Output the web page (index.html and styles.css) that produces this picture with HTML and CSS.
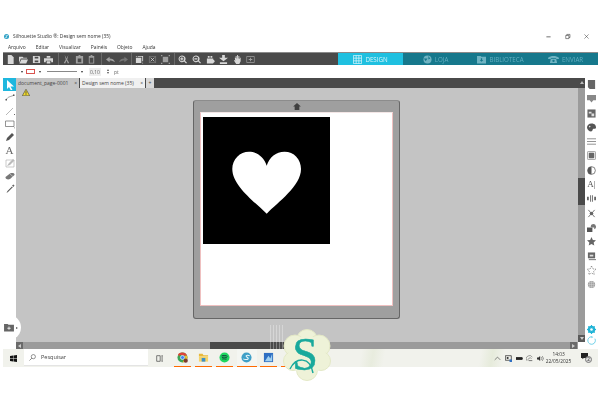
FILE: index.html
```html
<!DOCTYPE html>
<html lang="en">

<head>
    <meta charset="UTF-8">
    <title>Silhouette Studio</title>
    <link rel="stylesheet" href="styles.css">
</head>

<body>
    <!-- Title bar -->
    <div class="titlebar">
        <svg class="appicon" viewBox="0 0 10 10"><circle cx="5" cy="5" r="5" fill="#2a9fc4"/><path d="M2 7C5 8 8 6 5 5S4 2 8 3" fill="none" stroke="#fff" stroke-width="1.2"/></svg>
        <span class="apptitle">Silhouette Studio ®: Design sem nome (35)</span>
        <div class="winbtns">
            <svg viewBox="0 0 10 10"><path d="M2 5.5H8" stroke="#333"/></svg>
            <svg viewBox="0 0 10 10"><path d="M2.5 3.5H7V8H2.5ZM4 3.5V2H8.5V6.5H7" fill="none" stroke="#333" stroke-width=".8"/></svg>
            <svg viewBox="0 0 10 10"><path d="M2 2L8 8M8 2L2 8" stroke="#333" stroke-width=".7"/></svg>
        </div>
    </div>

    <!-- Menu -->
    <div class="menubar">
        <span>Arquivo</span><span>Editar</span><span>Visualizar</span><span>Painéis</span><span>Objeto</span><span>Ajuda</span>
    </div>

    <!-- Main toolbar -->
    <div class="toolbar">
        <div class="toolgroup">
            <svg viewBox="0 0 10 10"><path d="M2 0H6L8.500 2.500V10H2Z"/></svg>
            <svg viewBox="0 0 10 10"><path d="M0 2H4L5 3H9V4H2L0 9ZM2.500 5H10L8 9.500H.5Z"/></svg>
            <svg viewBox="0 0 10 10"><path d="M1 1H8L9 2V9H1ZM3 2V4H7V2ZM3 6V8H7V6Z" fill-rule="evenodd"/></svg>
            <svg viewBox="0 0 10 10"><path d="M3 1H7V3H3ZM0 3.500H10V8H8V6.500H2V8H0ZM3 7H7V9.500H3Z"/></svg>
        </div>
        <div class="toolgroup">
            <svg class="dim" viewBox="0 0 10 10"><path d="M3 0L5 4L7 0L5.800 5L8 9L6.500 9.500L5 6L3.500 9.500L2 9L4.200 5Z"/></svg>
            <svg class="dim" viewBox="0 0 10 10"><path d="M1 1H4V0H6V1H9V9.500H1ZM3 4V8H7V4Z" fill-rule="evenodd"/></svg>
            <svg class="dim" viewBox="0 0 10 10"><path d="M2 1H4V0H6V1H8V9.500H2ZM3 3V8.500H7V3Z" fill-rule="evenodd"/></svg>
        </div>
        <div class="toolgroup undo">
            <svg class="dim" viewBox="0 0 10 10"><path d="M0 5L4 2V4C7 4 9 5 10 8C8 6.500 6 6 4 6V8Z"/></svg>
            <svg class="dimmer" viewBox="0 0 10 10"><path d="M10 5L6 2V4C3 4 1 5 0 8C2 6.500 4 6 6 6V8Z"/></svg>
        </div>
        <div class="toolgroup">
            <svg viewBox="0 0 10 10"><path d="M1 3H7V9H1ZM3 1H9V7H8V2H3Z"/><path d="M1 1H2V2H1ZM8 8.500H9V9.500H8Z"/></svg>
            <svg class="dimmer" viewBox="0 0 10 10"><path d="M1 1H9V9H1ZM2 2V8H8V2Z" fill-rule="evenodd"/><path d="M3 3L7 7M7 3L3 7" stroke="#ddd" stroke-width=".8"/></svg>
            <svg class="dim" viewBox="0 0 10 10"><path d="M2 2H8V8H2Z"/><path d="M0 0H1.500V1.500H0ZM8.500 0H10V1.500H8.500ZM0 8.500H1.500V10H0ZM8.500 8.500H10V10H8.500Z"/></svg>
        </div>
        <div class="toolgroup last">
            <svg viewBox="0 0 10 10"><path d="M4.300 .5A3.800 3.800 0 1 0 6.800 7.300L9 9.500L10 8.500L7.800 6.300A3.800 3.800 0 0 0 4.300 .5ZM4.300 1.700A2.600 2.600 0 1 1 4.300 6.900A2.600 2.600 0 1 1 4.300 1.700ZM3.700 2.500H4.900V3.700H6V4.900H4.900V6H3.700V4.900H2.600V3.700H3.700Z" fill-rule="evenodd"/></svg>
            <svg viewBox="0 0 10 10"><path d="M4.300 .5A3.800 3.800 0 1 0 6.800 7.300L9 9.500L10 8.500L7.800 6.300A3.800 3.800 0 0 0 4.300 .5ZM4.300 1.700A2.600 2.600 0 1 1 4.300 6.900A2.600 2.600 0 1 1 4.300 1.700ZM2.600 3.700H6V4.900H2.600Z" fill-rule="evenodd"/></svg>
            <svg viewBox="0 0 10 10"><path d="M2 1H4V3H2ZM5 1H7V3H5ZM1 4H8V9.500H1Z"/><circle cx="7.500" cy="7" r="2"/></svg>
            <svg viewBox="0 0 10 10"><path d="M3.500 0H6.500V3H10L5 7L0 3H3.500ZM1 8H9V10H1Z"/></svg>
            <svg viewBox="0 0 10 10"><path d="M2 3H3V1H4V4H4.500V0H5.500V4H6V1H7V4.500H7.500V3H8.500V7L7 10H3.500L1 6L1.500 5.500L2.500 6.500Z"/></svg>
            <svg class="dim" viewBox="0 0 10 10"><path d="M.5 1.500H9.500V8.500H.5ZM1.200 2.200V7.800H8.800V2.200ZM4.500 3H5.500V4.500H7V5.500H5.500V7H4.500V5.500H3V4.500H4.500Z" fill-rule="evenodd"/></svg>
        </div>
        <div class="navtabs">
            <div class="navtab active">
                <svg class="navicon" viewBox="0 0 10 10"><path d="M.5 .5H9.500V9.500H.5ZM3.500 .5V9.500M6.500 .5V9.500M.5 3.500H9.500M.5 6.500H9.500" fill="none" stroke="#e2f7fc" stroke-width=".8"/></svg>
                DESIGN
            </div>
            <div class="navtab">
                <svg class="navicon" viewBox="0 0 10 10"><circle cx="5" cy="5" r="4.500" fill="#6fb3c2"/><path d="M1 4H5L3 7M6 1L8 4L6 5" fill="#16788c"/></svg>
                LOJA
            </div>
            <div class="navtab">
                <svg class="navicon" viewBox="0 0 10 10"><path d="M0 1H4L5 2H10V9.500H0Z" fill="#6fb3c2"/><path d="M4.300 3.500H5.700V5.500H7L5 7.500L3 5.500H4.300Z" fill="#16788c"/></svg>
                BIBLIOTECA
            </div>
            <div class="navtab">
                <svg class="navicon wide" viewBox="0 0 12 10"><path d="M0 3C3 .5 9 .5 12 3V4.500H9V3.500H3V4.500H0ZM3 4.500H9L10 9H2Z" fill="#6fb3c2"/><circle cx="6" cy="6.500" r="1.300" fill="#16788c"/></svg>
                ENVIAR
            </div>
        </div>
    </div>

    <!-- Line options -->
    <div class="optionsbar">
        <div class="swatch"></div>
        <span class="caret"></span>
        <div class="strokebox"></div>
        <span class="caret"></span>
        <div class="linesample"></div>
        <span class="caret"></span>
        <div class="numfield">0,10</div>
        <div class="spin"><i class="up"></i><i class="down"></i></div>
        <span class="unit">pt</span>
    </div>

    <div class="work">
        <!-- Left tools -->
        <div class="tools">
            <div class="tool selected">
                <svg viewBox="0 0 10 10"><path d="M2 0L9 6.500H5.500L7.500 10L6 10.500L4 7L2 9Z" fill="#fff"/></svg>
            </div>
            <div class="tool"><svg viewBox="0 0 10 10"><path d="M1 7C3 3 6 4 9 2" fill="none" stroke="#777" stroke-width=".7"/><path d="M.5 6H2V7.500H.5ZM8 1.500H9.500V3H8Z" fill="#555"/></svg></div>
            <div class="tool"><svg viewBox="0 0 10 10"><path d="M1 9L8 2" stroke="#999" stroke-width=".7"/><path d="M9 8H10V9H9Z" fill="#666"/></svg></div>
            <div class="tool"><svg viewBox="0 0 10 10"><path d="M.5 2H9V7.500H.5Z" fill="none" stroke="#666" stroke-width=".7"/><path d="M9.200 8.500H10V9.300H9.200Z" fill="#666"/></svg></div>
            <div class="tool"><svg viewBox="0 0 10 10"><path d="M1 9L2 6L7 1L9 3L4 8Z" fill="#555"/></svg></div>
            <div class="tool letter">A</div>
            <div class="tool"><svg viewBox="0 0 10 10"><path d="M1 2H9V9H1Z" fill="none" stroke="#aaa" stroke-width=".6"/><path d="M2 8L4 5L8 1L9.500 2.500L5 7Z" fill="#bbb"/></svg></div>
            <div class="tool"><svg viewBox="0 0 10 10"><path d="M.5 6L5 2.500C7 1.500 10 2 9.500 4L5 8C3 9 0 8 .5 6Z" fill="#777"/><path d="M5 3L8.500 6" stroke="#ddd" stroke-width=".6"/></svg></div>
            <div class="tool"><svg viewBox="0 0 10 10"><path d="M1.500 9L2.500 7L7 2.500L7.800 3.300L3 8Z" fill="#555"/><path d="M7 1.500L8.500 .5L9.500 1.500L8.500 3Z" fill="#666"/></svg></div>
        </div>

        <div class="center">
            <!-- Document tabs -->
            <div class="tabstrip">
                <div class="doctab">document_page-0001<b>×</b></div>
                <div class="doctab current">Design sem nome (35)<b>×</b></div>
                <div class="doctab add">+</div>
            </div>

            <!-- Cutting mat -->
            <div class="canvas">
                <svg class="warning" viewBox="0 0 10 9"><path d="M5 .3L9.800 8.700H.2Z" fill="#f4dd2a" stroke="#444" stroke-width=".8"/><path d="M4.500 3H5.500V6H4.500ZM4.500 6.700H5.500V7.700H4.500Z" fill="#333"/></svg>
                <div class="mat">
                    <div class="mattop">
                        <svg viewBox="0 0 10 9"><path d="M5 0L10 4.500H8V9H2V4.500H0Z" fill="#3f3f3f"/></svg>
                    </div>
                    <div class="sheet">
                        <div class="design">
                            <svg viewBox="0 0 127 127"><path d="M63.700 96.700C52 85 29.300 69 29.300 52C29.300 42 37 34.700 46 34.700C54 34.700 61 40 63.700 48.700C66.400 40 73 34.700 81.500 34.700C91 34.700 98 42 98 52C98 69 75 85 63.700 96.700Z" fill="#fff"/></svg>
                        </div>
                    </div>
                </div>
            </div>

            <div class="hscroll">
                <span class="arrow left"></span>
                <div class="hthumb"></div>
                <span class="arrow right"></span>
            </div>
        </div>

        <div class="vscroll">
            <span class="vend top"></span>
            <div class="vthumb"></div>
            <span class="vend bottom"></span>
        </div>

        <!-- Right panels -->
        <div class="panels">
            <svg viewBox="0 0 10 10"><path d="M1 0H9V10H3L1 8Z" fill="#666"/></svg>
            <svg viewBox="0 0 10 10"><path d="M0 1H10V7H7L5 9.500L3 7H0Z" fill="#888"/></svg>
            <svg viewBox="0 0 10 10"><path d="M.5 .5H9.500V9.500H.5Z" fill="#666"/><path d="M2 3H5V5H2ZM5 5H8V8H5Z" fill="#ddd"/></svg>
            <svg viewBox="0 0 10 10"><path d="M5 .5C9 .5 10 3 10 5S8 6 7 6.500S6.500 9.500 4.500 9.500S0 7.500 0 5S2 .5 5 .5Z" fill="#555"/><circle cx="3" cy="4" r=".9" fill="#ddd"/></svg>
            <svg viewBox="0 0 10 10"><path d="M0 2H10M0 5H10M0 8H10" stroke="#888" stroke-width="1"/></svg>
            <svg viewBox="0 0 10 10"><rect x=".5" y=".5" width="9" height="9" rx="1" fill="#eee" stroke="#777" stroke-width=".7"/><rect x="2" y="2" width="6" height="6" rx="1" fill="#666"/></svg>
            <svg viewBox="0 0 10 10"><circle cx="5" cy="5" r="4.300" fill="#fff" stroke="#555" stroke-width=".8"/><path d="M5 .7A4.300 4.300 0 0 0 5 9.300Z" fill="#555"/></svg>
            <div class="panelletter">A|</div>
            <svg viewBox="0 0 10 10"><path d="M0 3H2V7H0ZM3.500 1.500H4.500V8.500H3.500ZM5.500 1.500H6.500V8.500H5.500ZM8 3H10V7H8Z" fill="#666"/></svg>
            <svg viewBox="0 0 10 10"><path d="M1.500 1L8.500 9M8.500 1L1.500 9" stroke="#777" stroke-width="1.100"/><circle cx="5" cy="5" r="2" fill="#666"/></svg>
            <svg viewBox="0 0 10 10"><path d="M0 5H6V10H0Z" fill="#555"/><path d="M4 4A3 3 0 1 1 8 7V5H5Z" fill="#777"/></svg>
            <svg viewBox="0 0 10 10"><path d="M5 0L6.500 3.200L10 3.600L7.400 6L8.100 9.500L5 7.800L1.900 9.500L2.600 6L0 3.600L3.500 3.200Z" fill="#666"/></svg>
            <svg viewBox="0 0 10 10"><path d="M1 .5H9V7H1Z" fill="#666"/><path d="M3 3H7V5H3Z" fill="#ddd"/><path d="M2 8.500H10" stroke="#666"/></svg>
            <svg viewBox="0 0 10 10"><path d="M5 0L6.500 3.200L10 3.600L7.400 6L8.100 9.500L5 7.800L1.900 9.500L2.600 6L0 3.600L3.500 3.200Z" fill="none" stroke="#555" stroke-width=".8" stroke-dasharray="1 1"/></svg>
            <svg viewBox="0 0 10 10"><circle cx="5" cy="5" r="4" fill="#999"/><path d="M1 3H9M1 5H9M1 7H9M3 1V9M5 1V9M7 1V9" stroke="#ddd" stroke-width=".5"/></svg>
            <div class="panelgap"></div>
            <svg viewBox="0 0 10 10"><circle cx="5" cy="5" r="3.200" fill="none" stroke="#1fb3d6" stroke-width="2.200"/><path d="M5 0V10M0 5H10M1.500 1.500L8.500 8.500M8.500 1.500L1.500 8.500" stroke="#1fb3d6" stroke-width="1.200"/><circle cx="5" cy="5" r="1.400" fill="#fff"/></svg>
            <svg class="refresh" viewBox="0 0 10 10"><path d="M8.800 3A4.200 4.200 0 1 1 5 .8" fill="none" stroke="#6fd0e8" stroke-width="1.100"/><path d="M4.500 0L7 1L5 2.500Z" fill="#6fd0e8"/></svg>
        </div>

        <!-- Folder button sits over the canvas edge -->
        <div class="folderbtn">
            <svg viewBox="0 0 11 10"><path d="M0 1H4L5 2H11V9.500H0Z" fill="#666"/><path d="M5 4H6V5.300H7.300V6.300H6V7.500H5V6.300H3.700V5.300H5Z" fill="#eee"/></svg>
            <span></span>
        </div>
    </div>

    <!-- Windows taskbar -->
    <div class="taskbar">
        <svg class="start" viewBox="0 0 10 10"><path d="M0 1.400L4.400 .8V4.700H0ZM5 .7L10 0V4.700H5ZM0 5.300H4.400V9.200L0 8.600ZM5 5.300H10V10L5 9.300Z" fill="#111"/></svg>
        <div class="searchbox">
            <svg viewBox="0 0 10 10"><circle cx="6.200" cy="3.800" r="3" fill="none" stroke="#444" stroke-width=".8"/><path d="M4 6L.7 9.300" stroke="#444" stroke-width=".9"/></svg>
            Pesquisar
        </div>
        <svg class="taskview" viewBox="0 0 10 10"><path d="M1 1H6V9H1ZM8 1H9.500M8 9H9.500M8.700 1V9" fill="none" stroke="#333" stroke-width=".9"/></svg>
        <div class="apps">
            <div class="app">
                <svg viewBox="0 0 12 12"><circle cx="6" cy="6" r="5.500" fill="#3aa655"/><path d="M6 .5A5.500 5.500 0 0 1 11 4H6A2 2 0 0 0 2.500 5L1 2.500A5.500 5.500 0 0 1 6 .5Z" fill="#dc4437"/><path d="M11 4A5.500 5.500 0 0 1 6 11.500L8 7.500A2 2 0 0 0 8 4Z" fill="#f2c230"/><circle cx="6" cy="6" r="2.200" fill="#4285f4" stroke="#fff" stroke-width=".7"/><circle cx="9.500" cy="9.500" r="2.300" fill="#7a3b30"/></svg>
            </div>
            <div class="app">
                <svg viewBox="0 0 12 12"><path d="M1 2H5L6 3.500H11V5H1Z" fill="#e8b93a"/><path d="M1 5H11V10.500H1Z" fill="#f5d46a"/><path d="M4 6.500H8V10.500H4Z" fill="#3b8fc8"/></svg>
            </div>
            <div class="app">
                <svg viewBox="0 0 12 12"><circle cx="6" cy="6" r="5.500" fill="#1ed760"/><path d="M2.800 4.300C5 3.500 7.500 3.700 9.300 4.800M3.200 6C5 5.400 7 5.600 8.700 6.500M3.600 7.700C5 7.300 6.700 7.400 8 8.100" fill="none" stroke="#123" stroke-width=".9"/></svg>
            </div>
            <div class="app soft">
                <svg viewBox="0 0 12 12"><circle cx="6" cy="6" r="5.500" fill="#3f9fc7"/><path d="M2.500 7.500C5 9 10 8 7 6S6 3 9.500 4" fill="none" stroke="#e8f6fb" stroke-width="1.100"/></svg>
            </div>
            <div class="app">
                <svg viewBox="0 0 12 12"><path d="M1 1H11V11H1Z" fill="#2f6fc2"/><path d="M2 10L6 4L8 7L10 2V10Z" fill="#9fd0f0"/></svg>
            </div>
            <div class="app tail"></div>
        </div>
        <div class="tray">
            <svg viewBox="0 0 10 10" class="chev"><path d="M1 7L5 3L9 7" fill="none" stroke="#333" stroke-width=".8"/></svg>
            <svg viewBox="0 0 10 10"><path d="M.5 1H9V7.500H.5Z" fill="none" stroke="#222"/><path d="M6.500 6.500H10V10H6.500Z" fill="#2f6fc2"/><path d="M2.500 3H5V5.500H2.500Z" fill="#222"/></svg>
            <svg viewBox="0 0 10 10"><path d="M0 3H9V7H0Z" fill="#222"/><path d="M9 4H10V6H9Z" fill="#222"/></svg>
            <svg viewBox="0 0 10 10"><path d="M1 8A4 4 0 0 1 9 3M3 8A3 3 0 0 1 8 5" fill="none" stroke="#444" stroke-width=".7"/><path d="M4 8L9 8" stroke="#444"/></svg>
            <svg viewBox="0 0 10 10"><path d="M0 3.500H2L4.500 1.500V8.500L2 6.500H0Z" fill="#333"/><path d="M6 3A3 3 0 0 1 6 7M7.500 1.500A5 5 0 0 1 7.500 8.500" fill="none" stroke="#333" stroke-width=".7"/></svg>
            <div class="clock"><span>14:03</span><span>22/05/2025</span></div>
            <div class="notify">
                <svg viewBox="0 0 10 10"><path d="M0 0H10V7H4L2 9V7H0Z" fill="#222"/></svg>
                <span class="badge">2</span>
            </div>
        </div>
    </div>

    <!-- Watermark logo over the window -->
    <div class="stripes"></div>
    <svg class="logo" viewBox="0 0 48 52">
        <g fill="#eef2d8" stroke="#e3e8c6" stroke-width="1">
            <circle cx="24" cy="11" r="10.500"/>
            <circle cx="12" cy="17" r="11"/>
            <circle cx="36" cy="17" r="11"/>
            <circle cx="10" cy="32" r="9.500"/>
            <circle cx="38" cy="32" r="9.500"/>
            <circle cx="24" cy="41" r="10.500"/>
        </g>
        <circle cx="24" cy="26" r="19" fill="#eef2d8"/>
        <text x="22" y="41" class="logotext">S</text>
        <path d="M7 40C13 28 27 27 30 44" fill="none" stroke="#18a99c" stroke-width="1.500"/>
    </svg>
</body>

</html>
```

FILE: styles.css
```css
* {
    margin: 0;
    padding: 0;
    box-sizing: border-box;
}

html {
    height: 100%;
}

body {
    position: relative;
    width: 601px;
    height: 400px;
    padding: 30px 3px 0 3px;
    overflow: hidden;
    background-color: #fff;
    font-family: "Open Sans", "Liberation Sans", sans-serif;
    font-size: 5.5px;
    color: #333;
    filter: blur(.3px);
}

svg {
    display: block;
}

/* title and menu */
.titlebar {
    display: flex;
    align-items: center;
    height: 12px;
    padding-left: 1px;
}

.appicon {
    width: 5px;
    height: 5px;
    margin-right: 4px;
}

.apptitle {
    flex: 1;
    font-size: 4.900px;
}

.winbtns {
    display: flex;
    gap: 12px;
    margin-right: 8px;
}

.winbtns svg {
    width: 7px;
    height: 7px;
}

.menubar {
    display: flex;
    align-items: center;
    gap: 10px;
    height: 10px;
    padding-left: 5px;
    font-size: 4.900px;
}

/* main toolbar */
.toolbar {
    display: flex;
    align-items: center;
    height: 13px;
    background-color: #4a4a4a;
    border-top: 1px solid #8a8a8a;
}

.toolgroup {
    display: flex;
    align-items: center;
    gap: 3.800px;
    height: 100%;
    padding: 0 4.500px 0 3px;
    border-right: 1px solid #6a6a6a;
}

.toolgroup svg {
    width: 9px;
    height: 9px;
    fill: #d8d8d8;
}

.toolgroup svg.dim {
    fill: #a0a0a0;
}

.toolgroup svg.dimmer {
    fill: #757575;
}

.toolgroup.undo {
    padding: 0 3px 0 4.500px;
}

.toolgroup.last {
    flex: 1;
    gap: 4.600px;
    border-right: 0;
}

.navtabs {
    display: flex;
    height: 100%;
}

.navtab {
    display: flex;
    align-items: center;
    justify-content: center;
    gap: 3px;
    width: 65px;
    height: 100%;
    background-color: #16788c;
    color: #62aec0;
    font-size: 6.200px;
}

.navtab.active {
    background-color: #1fc0e0;
    color: #d8f5fb;
}

.navicon {
    width: 9px;
    height: 9px;
}

.navicon.wide {
    width: 11px;
}

/* line options */
.optionsbar {
    display: flex;
    align-items: center;
    height: 13px;
    padding-left: 4px;
}

.swatch {
    width: 10px;
    height: 8px;
    background-color: #fff;
    background-image: radial-gradient(#aaa 40%, transparent 45%);
    background-size: 2px 2px;
    margin-right: 3.500px;
}

.caret {
    width: 0;
    height: 0;
    border-left: 1.500px solid transparent;
    border-right: 1.500px solid transparent;
    border-top: 2px solid #333;
    margin-right: 3px;
}

.strokebox {
    width: 9px;
    height: 5px;
    border: 1px solid #d9534f;
    background-color: #fff;
    margin-right: 4px;
}

.linesample {
    width: 30px;
    height: 1px;
    background-color: #888;
    margin: 0 4px 0 3.500px;
}

.numfield {
    width: 12px;
    height: 8px;
    margin-left: 3px;
    background-color: #eee;
    text-align: center;
    line-height: 8px;
    font-size: 5px;
    color: #666;
}

.spin {
    display: flex;
    flex-direction: column;
    gap: 1px;
    margin: 0 5px 0 6px;
}

.spin i {
    display: block;
    width: 0;
    height: 0;
    border-left: 1.500px solid transparent;
    border-right: 1.500px solid transparent;
}

.spin .up {
    border-bottom: 2px solid #555;
}

.spin .down {
    border-top: 2px solid #555;
}

.unit {
    font-size: 5px;
    color: #666;
}

/* workspace */
.work {
    display: flex;
    height: 271px;
}

.tools {
    display: flex;
    flex-direction: column;
    align-items: center;
    width: 13px;
}

.tool {
    display: flex;
    align-items: center;
    justify-content: center;
    width: 13px;
    height: 13px;
}

.tool svg {
    width: 10px;
    height: 10px;
}

.tool.selected {
    background-color: #1fb7de;
}

.tool.letter {
    font-family: "Liberation Serif", serif;
    font-size: 11px;
    color: #666;
}

.center {
    display: flex;
    flex-direction: column;
    width: 562px;
}

.tabstrip {
    display: flex;
    align-items: flex-end;
    height: 10px;
    background-color: #4a4a4a;
}

.doctab {
    display: flex;
    justify-content: space-between;
    align-items: center;
    width: 64px;
    height: 10px;
    padding: 0 2px;
    background-color: #c4c4c4;
    border-right: 1px solid #4a4a4a;
    font-size: 5px;
    color: #444;
}

.doctab b {
    font-weight: normal;
}

.doctab.current {
    width: 66px;
    background-color: #f0f0f0;
}

.doctab.add {
    width: 9px;
    justify-content: center;
    background-color: #d8d8d8;
}

.canvas {
    position: relative;
    flex: 1;
    padding: 12px 0 0 177px;
    background-color: #c4c4c4;
}

.warning {
    position: absolute;
    top: 1px;
    left: 6px;
    width: 8px;
    height: 7px;
}

.mat {
    width: 207px;
    height: 219px;
    padding: 0 6px;
    background-color: #9f9f9f;
    border: 1px solid #666;
    border-top-color: #8c8c8c;
    border-radius: 3px;
}

.mattop {
    display: flex;
    justify-content: center;
    align-items: center;
    height: 11px;
    padding-left: 1px;
}

.mattop svg {
    width: 8px;
    height: 7px;
}

.sheet {
    width: 193px;
    height: 194px;
    padding: 4px 2px;
    background-color: #fff;
    border: 1px solid #efc0c0;
    border-top-color: #f3e6e6;
}

.design {
    width: 127px;
    height: 127px;
    background-color: #000;
}

.hscroll {
    display: flex;
    align-items: center;
    height: 7px;
    background-color: #9b9b9b;
}

.arrow {
    display: block;
    width: 7px;
    height: 7px;
    background-color: #6a6a6a;
    position: relative;
}

.arrow::after {
    content: "";
    position: absolute;
    top: 1.500px;
    left: 2px;
    border-top: 2px solid transparent;
    border-bottom: 2px solid transparent;
}

.arrow.left::after {
    border-right: 3px solid #ccc;
}

.arrow.right {
    margin-right: 1px;
}

.arrow.right::after {
    border-left: 3px solid #ccc;
}

.hthumb {
    width: 80px;
    height: 7px;
    margin: 0 280px 0 187px;
    background-color: #4a4a4a;
}

.vscroll {
    display: flex;
    flex-direction: column;
    width: 7px;
    height: 264px;
    background-color: #9b9b9b;
}

.vend {
    display: block;
    width: 7px;
    height: 7px;
    position: relative;
}

.vend.top {
    background-color: #4a4a4a;
    height: 10px;
}

.vend.top::after {
    content: "";
    position: absolute;
    top: 3px;
    left: 1.500px;
    border-left: 2px solid transparent;
    border-right: 2px solid transparent;
    border-bottom: 3px solid #bbb;
}

.vend.bottom {
    background-color: #5a5a5a;
}

.vend.bottom::after {
    content: "";
    position: absolute;
    top: 2px;
    left: 1.500px;
    border-left: 2px solid transparent;
    border-right: 2px solid transparent;
    border-top: 3px solid #ccc;
}

.vthumb {
    width: 7px;
    height: 27px;
    margin: 90px 0 130px 0;
    background-color: #4a4a4a;
}

.panels {
    display: flex;
    flex-direction: column;
    align-items: center;
    gap: 5.300px;
    width: 13px;
    padding-top: 2px;
}

.panels svg {
    width: 9px;
    height: 9px;
    flex: none;
}

.panels .refresh {
    margin-top: -3.300px;
}

.panelletter {
    height: 9px;
    font-family: "Liberation Serif", serif;
    font-size: 9px;
    line-height: 9px;
    color: #555;
}

.panelgap {
    height: 25.400px;
    flex: none;
}

.folderbtn {
    position: absolute;
    top: 315px;
    left: -3px;
    display: flex;
    align-items: center;
    gap: 2px;
    width: 24px;
    height: 25px;
    padding-left: 7px;
    background-color: #fff;
    border-radius: 50%;
}

.folderbtn svg {
    width: 10px;
    height: 9px;
}

.folderbtn span {
    border-top: 1.500px solid transparent;
    border-bottom: 1.500px solid transparent;
    border-left: 2px solid #555;
}

/* taskbar */
.taskbar {
    display: flex;
    align-items: center;
    height: 18px;
    background-color: #f1f2ec;
    background-image: linear-gradient(100deg, transparent 60%, #e8ecde 62%, transparent 64%, transparent 80%, #e6ebdb 82%, transparent 84%);
}

.start {
    width: 7px;
    height: 7px;
    margin: 0 7px 0 7px;
}

.searchbox {
    display: flex;
    align-items: center;
    gap: 5px;
    width: 124px;
    height: 17px;
    align-self: flex-start;
    padding-left: 5px;
    background-color: #fff;
    border-bottom: 1px solid #e4e4e4;
    font-size: 5.500px;
    color: #444;
}

.searchbox svg {
    width: 7px;
    height: 7px;
}

.taskview {
    width: 7px;
    height: 7px;
    margin: 0 10.500px 0 8px;
}

.apps {
    display: flex;
    gap: 4px;
    height: 100%;
    flex: 1;
}

.app {
    display: flex;
    align-items: center;
    justify-content: center;
    width: 17px;
    height: 100%;
    border-bottom: 1px solid #ff6a00;
}

.app.soft {
    width: 20px;
    background-color: #f4f6f2;
    margin-right: -1px;
}

.app.tail {
    width: 13px;
}

.app svg {
    width: 11px;
    height: 11px;
}

.tray {
    display: flex;
    align-items: center;
    gap: 3.700px;
    padding-right: 7px;
}

.tray > svg {
    width: 7px;
    height: 7px;
}

.clock {
    display: flex;
    flex-direction: column;
    align-items: center;
    margin: 0 6px 0 -2px;
    font-size: 4.800px;
    line-height: 7px;
    color: #333;
}

.notify {
    position: relative;
    width: 10px;
    height: 10px;
}

.notify svg {
    width: 7px;
    height: 7px;
}

.badge {
    position: absolute;
    top: 3px;
    left: 4px;
    width: 7px;
    height: 7px;
    border: 1px solid #777;
    border-radius: 50%;
    background-color: #ddd;
    text-align: center;
    font-size: 4.500px;
    line-height: 5px;
}

/* watermark */
.stripes {
    position: absolute;
    top: 325px;
    left: 270px;
    width: 15px;
    height: 25px;
    background-image: repeating-linear-gradient(90deg, rgba(255, 255, 255, 0.3) 0, rgba(255, 255, 255, 0.3) 1px, transparent 1px, transparent 3px);
}

.logo {
    position: absolute;
    top: 329px;
    left: 283px;
    width: 48px;
    height: 52px;
}

.logotext {
    font-family: "Liberation Serif", serif;
    font-size: 46px;
    fill: #18a99c;
    stroke: #18a99c;
    stroke-width: .5px;
    text-anchor: middle;
}
```
